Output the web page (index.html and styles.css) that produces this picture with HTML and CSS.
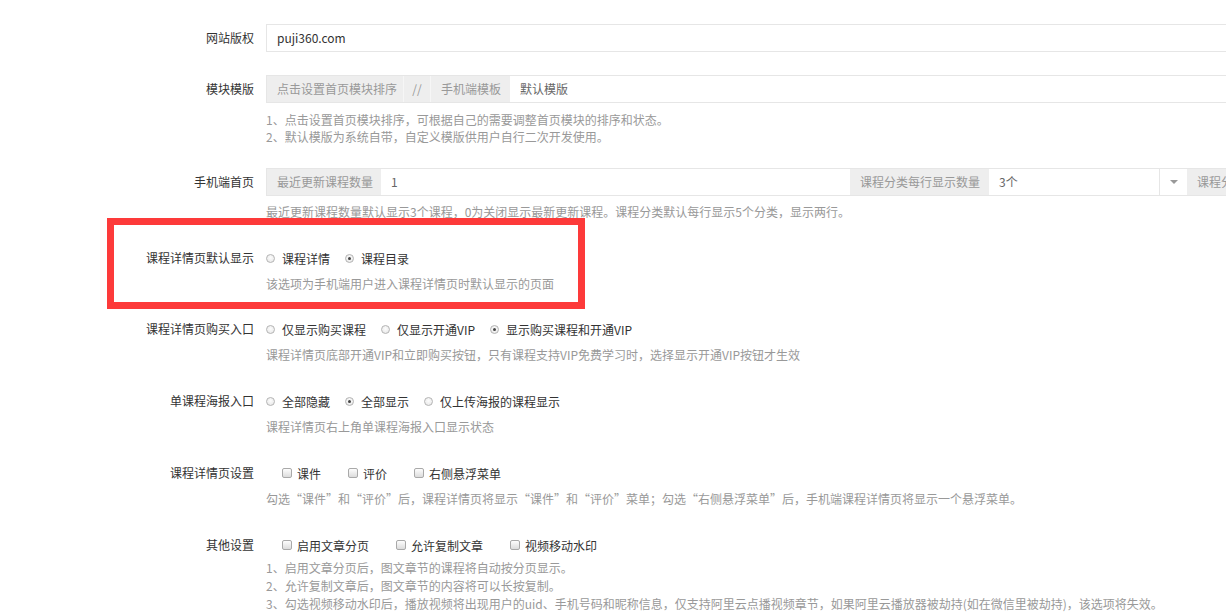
FILE: index.html
```html
<!DOCTYPE html>
<html lang="zh-CN">
<head>
<meta charset="utf-8">
<title>设置</title>
<link rel="stylesheet" href="styles.css">
</head>
<body>
<div class="form">
  <div class="item">
    <div class="label">网站版权</div>
    <div class="block">
      <div class="group">
        <div class="field grow dark">puji360.com</div>
      </div>
    </div>
  </div>

  <div class="item">
    <div class="label">模块模版</div>
    <div class="block">
      <div class="group">
        <div class="addon w137 split">点击设置首页模块排序</div>
        <div class="addon w27 split">//</div>
        <div class="addon w79">手机端模板</div>
        <div class="field grow">默认模版</div>
      </div>
      <div class="help loose">1、点击设置首页模块排序，可根据自己的需要调整首页模块的排序和状态。<br>2、默认模版为系统自带，自定义模版供用户自行二次开发使用。</div>
    </div>
  </div>

  <div class="item wide">
    <div class="label">手机端首页</div>
    <div class="block">
      <div class="group">
        <div class="addon w114">最近更新课程数量</div>
        <div class="field w469">1</div>
        <div class="addon w139">课程分类每行显示数量</div>
        <div class="field w171">3个</div>
        <div class="caret-cell"><span class="caret"></span></div>
        <div class="addon grow">课程分类显示行数</div>
      </div>
      <div class="help">最近更新课程数量默认显示3个课程，0为关闭显示最新更新课程。课程分类默认每行显示5个分类，显示两行。</div>
    </div>
  </div>

  <div class="item">
    <div class="label">课程详情页默认显示</div>
    <div class="block">
      <div class="choices">
        <span class="opt"><span class="radio"></span>课程详情</span>
        <span class="opt"><span class="radio on"></span>课程目录</span>
      </div>
      <div class="help tight">该选项为手机端用户进入课程详情页时默认显示的页面</div>
    </div>
  </div>

  <div class="item wide">
    <div class="label">课程详情页购买入口</div>
    <div class="block">
      <div class="choices">
        <span class="opt"><span class="radio"></span>仅显示购买课程</span>
        <span class="opt"><span class="radio"></span>仅显示开通VIP</span>
        <span class="opt"><span class="radio on"></span>显示购买课程和开通VIP</span>
      </div>
      <div class="help tight">课程详情页底部开通VIP和立即购买按钮，只有课程支持VIP免费学习时，选择显示开通VIP按钮才生效</div>
    </div>
  </div>

  <div class="item wide">
    <div class="label">单课程海报入口</div>
    <div class="block">
      <div class="choices">
        <span class="opt"><span class="radio"></span>全部隐藏</span>
        <span class="opt"><span class="radio on"></span>全部显示</span>
        <span class="opt"><span class="radio"></span>仅上传海报的课程显示</span>
      </div>
      <div class="help tight">课程详情页右上角单课程海报入口显示状态</div>
    </div>
  </div>

  <div class="item wide">
    <div class="label">课程详情页设置</div>
    <div class="block">
      <div class="choices checks">
        <span class="chk"><span class="box"></span>课件</span>
        <span class="chk"><span class="box"></span>评价</span>
        <span class="chk"><span class="box"></span>右侧悬浮菜单</span>
      </div>
      <div class="help tight">勾选“课件”和“评价”后，课程详情页将显示“课件”和“评价”菜单；勾选“右侧悬浮菜单”后，手机端课程详情页将显示一个悬浮菜单。</div>
    </div>
  </div>

  <div class="item">
    <div class="label">其他设置</div>
    <div class="block">
      <div class="choices checks">
        <span class="chk"><span class="box"></span>启用文章分页</span>
        <span class="chk"><span class="box"></span>允许复制文章</span>
        <span class="chk"><span class="box"></span>视频移动水印</span>
      </div>
      <div class="help multi">1、启用文章分页后，图文章节的课程将自动按分页显示。<br>2、允许复制文章后，图文章节的内容将可以长按复制。<br>3、勾选视频移动水印后，播放视频将出现用户的uid、手机号码和昵称信息，仅支持阿里云点播视频章节，如果阿里云播放器被劫持(如在微信里被劫持)，该选项将失效。</div>
    </div>
  </div>

  <div class="mark"></div>
</div>
</body>
</html>
```

FILE: styles.css
```css
html, body {
  margin: 0;
  padding: 0;
  background: #fff;
  overflow: hidden;
}
body {
  font-family: "Noto Sans CJK SC", "Noto Sans", sans-serif;
  font-size: 12px;
  color: #333;
}
.form {
  position: relative;
  width: 1400px;
  padding-top: 24px;
}
.item {
  display: flex;
  margin-bottom: 23px;
}
.item.wide {
  margin-bottom: 24px;
}
.label {
  width: 254px;
  margin-right: 12px;
  text-align: right;
  line-height: 27px;
  height: 28px;
  white-space: nowrap;
  color: #333;
}
.block {
  width: 1100px;
}
.group {
  display: flex;
  height: 28px;
  box-sizing: border-box;
  border: 1px solid #e6e6e6;
  background: #fff;
}
.addon, .field {
  box-sizing: border-box;
  padding: 0 10px;
  line-height: 25.5px;
  white-space: nowrap;
  overflow: hidden;
  flex: none;
}
.addon {
  background: #eeeeee;
  color: #999;
}
.addon.split {
  border-right: 1px solid #f6f6f6;
}
.field {
  background: #fff;
  color: #666;
}
.field.dark {
  color: #333;
}
.grow { flex: 1 1 auto; }
.w27 { width: 27px; text-align: center; padding: 0; }
.w79 { width: 79px; }
.w114 { width: 114px; }
.w137 { width: 137px; }
.w139 { width: 139px; }
.w171 { width: 170px; }
.w469 { width: 469px; }
.caret-cell {
  flex: none;
  width: 28px;
  box-sizing: border-box;
  border-left: 1px solid #e6e6e6;
  display: flex;
  align-items: center;
  justify-content: center;
  background: #fff;
}
.caret {
  width: 0;
  height: 0;
  border-left: 4px solid transparent;
  border-right: 4px solid transparent;
  border-top: 4px solid #999;
}
.help {
  margin-top: 7px;
  line-height: 17px;
  color: #999;
  white-space: nowrap;
}
.help.loose {
  margin-top: 8px;
}
.help.tight {
  margin-top: 3px;
}
.help.multi {
  margin-top: 0;
  line-height: 18px;
}
.choices {
  display: flex;
  align-items: center;
  height: 28px;
  white-space: nowrap;
}
.opt {
  display: inline-flex;
  align-items: center;
  margin-right: 15px;
  color: #333;
}
.radio {
  width: 9px;
  height: 9px;
  box-sizing: border-box;
  border: 1px solid #b4b4b4;
  border-radius: 50%;
  background: radial-gradient(circle at 50% 40%, #fdfdfd 0, #e4e4e4 100%);
  margin-right: 7px;
  position: relative;
  flex: none;
}
.radio.on::after {
  content: "";
  position: absolute;
  left: 2px;
  top: 2px;
  width: 3px;
  height: 3px;
  border-radius: 50%;
  background: #444;
}
.checks {
  padding-left: 16px;
}
.chk {
  display: inline-flex;
  align-items: center;
  margin-right: 27px;
  color: #333;
}
.box {
  width: 10px;
  height: 10px;
  box-sizing: border-box;
  border: 1px solid #a9a9a9;
  border-radius: 2px;
  background: linear-gradient(#fdfdfd, #dcdcdc);
  margin-right: 5px;
  flex: none;
}
.mark {
  position: absolute;
  left: 107px;
  top: 218px;
  width: 478px;
  height: 91px;
  box-sizing: border-box;
  border: 7px solid #fd3a3a;
  pointer-events: none;
}
```
